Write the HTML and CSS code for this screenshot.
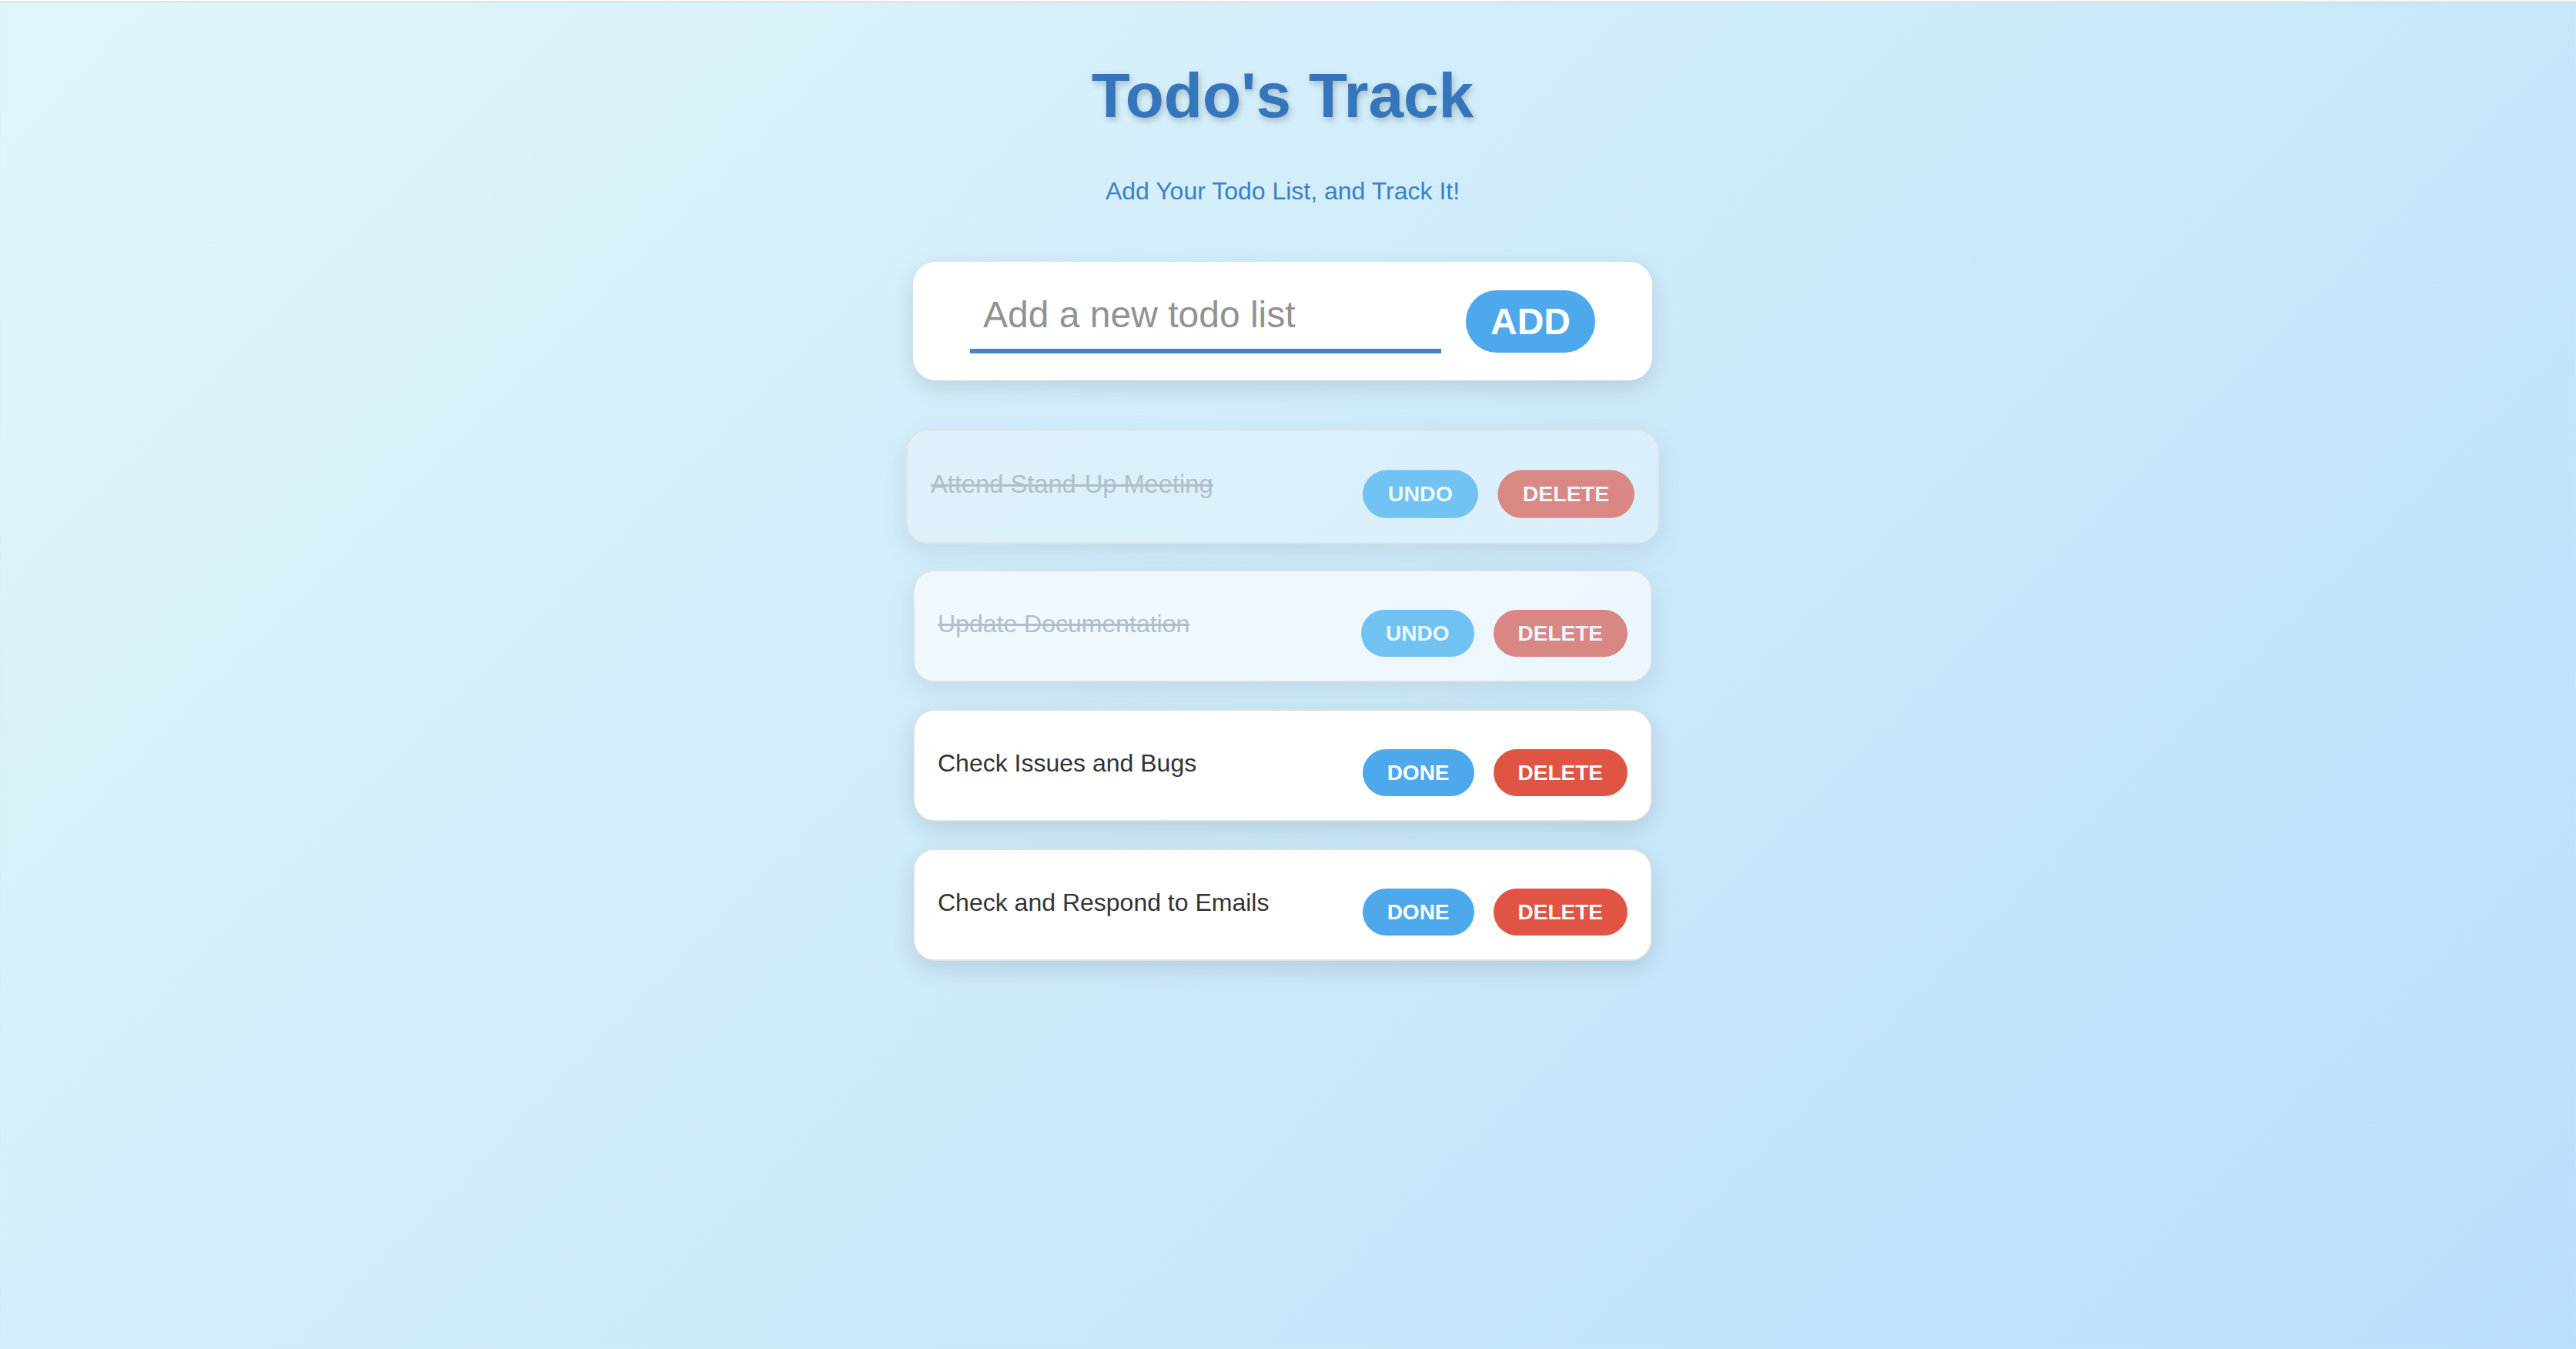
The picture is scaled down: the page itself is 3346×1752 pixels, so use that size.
FILE: index.html
```html
<!DOCTYPE html>
<html lang="en">
<head>
<meta charset="utf-8">
<title>Todo's Track</title>
<link rel="stylesheet" href="styles.css">
</head>
<body>
<main class="app">
  <h1 class="title">Todo's Track</h1>
  <p class="subtitle">Add Your Todo List, and Track It!</p>
  <form class="add-form">
    <input class="add-input" type="text" placeholder="Add a new todo list">
    <button class="btn btn-add" type="button">ADD</button>
  </form>
  <ul class="todo-list">
    <li class="todo done hovered">
      <span class="todo-text">Attend Stand-Up Meeting</span>
      <div class="todo-actions">
        <button class="btn btn-small btn-undo" type="button">UNDO</button>
        <button class="btn btn-small btn-delete" type="button">DELETE</button>
      </div>
    </li>
    <li class="todo done">
      <span class="todo-text">Update Documentation</span>
      <div class="todo-actions">
        <button class="btn btn-small btn-undo" type="button">UNDO</button>
        <button class="btn btn-small btn-delete" type="button">DELETE</button>
      </div>
    </li>
    <li class="todo">
      <span class="todo-text">Check Issues and Bugs</span>
      <div class="todo-actions">
        <button class="btn btn-small btn-done" type="button">DONE</button>
        <button class="btn btn-small btn-delete" type="button">DELETE</button>
      </div>
    </li>
    <li class="todo">
      <span class="todo-text">Check and Respond to Emails</span>
      <div class="todo-actions">
        <button class="btn btn-small btn-done" type="button">DONE</button>
        <button class="btn btn-small btn-delete" type="button">DELETE</button>
      </div>
    </li>
  </ul>
</main>
</body>
</html>
```

FILE: styles.css
```css
html {
  height: 100%;
  border-top: 2px solid #fafafa;
  box-sizing: border-box;
}

body {
  margin: 0;
  min-height: calc(100% - 1px);
  border-top: 1px solid #cdcdcd;
  background: linear-gradient(135deg, #e0f7fa 0%, #bbdefb 100%);
  font-family: "Liberation Sans", Arial, sans-serif;
  padding-right: 14px;
}

.app {
  width: 960px;
  margin: 0 auto;
  padding-top: 80px;
  display: flex;
  flex-direction: column;
  align-items: center;
}

.title {
  margin: 0;
  font-size: 82px;
  line-height: 82px;
  font-weight: 700;
  color: #3475bb;
  text-shadow: 2px 4px 8px rgba(0, 0, 0, 0.22);
}

.subtitle {
  margin: 67px 0 0;
  font-size: 32px;
  line-height: 32px;
  color: #3a80c8;
}

.add-form {
  margin-top: 76px;
  width: 960px;
  box-sizing: border-box;
  padding: 35px 74px;
  background: #fff;
  border-radius: 30px;
  box-shadow: 0 10px 30px rgba(0, 0, 0, 0.12);
  display: flex;
  align-items: center;
  gap: 32px;
}

.add-input {
  width: 612px;
  height: 84px;
  box-sizing: border-box;
  border: none;
  border-bottom: 6px solid #3a86c8;
  padding: 0 0 11px 17px;
  font-family: "Liberation Sans", Arial, sans-serif;
  font-size: 48px;
  color: #333;
  background: transparent;
  outline: none;
}

.add-input::placeholder {
  color: #929292;
}

.btn {
  border: none;
  color: #fff;
  font-family: "Liberation Sans", Arial, sans-serif;
  font-weight: 700;
  cursor: pointer;
}

.btn-add {
  width: 168px;
  height: 81px;
  padding: 0;
  border-radius: 40px;
  font-size: 48px;
  background: #4da8ec;
}

.todo-list {
  list-style: none;
  margin: 65px 0 0;
  padding: 0;
  width: 960px;
  display: flex;
  flex-direction: column;
  gap: 35px;
}

.todo {
  box-sizing: border-box;
  width: 960px;
  height: 146px;
  padding: 50px 30px 31px;
  background: #fff;
  border: 2px solid #e0e0e0;
  border-radius: 28px;
  box-shadow: 0 10px 30px rgba(0, 0, 0, 0.12);
  display: flex;
  justify-content: space-between;
  align-items: flex-start;
}

.todo-text {
  font-size: 32px;
  color: #333;
}

.todo-actions {
  display: flex;
  gap: 25px;
}

.btn-small {
  height: 61px;
  padding: 0 32px;
  border-radius: 31px;
  font-size: 28px;
}

.btn-done {
  background: #4da8ec;
}

.btn-undo {
  background: #40aef0;
}

.btn-delete {
  background: #e05444;
}

.todo.done {
  opacity: 0.65;
}

.todo.done .todo-text {
  color: #9ea8ae;
  text-decoration: line-through;
}

.todo.hovered {
  background: #e3f2fd;
  transform: scale(1.02);
}
```
